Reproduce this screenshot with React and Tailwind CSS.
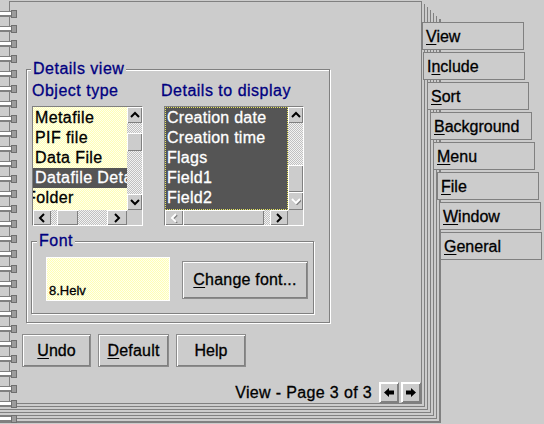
import React from 'react';

const bevel = 'bg-[#cccccc] shadow-[inset_1px_1px_0_#ffffff,inset_-1px_-1px_0_#808080]';
const track = 'bg-[image:repeating-conic-gradient(#c0c0c0_0_25%,#f2f2f2_0_50%)] bg-[length:2px_2px]';
const yellow = 'bg-[image:repeating-conic-gradient(#ffffb4_0_25%,#ffffee_0_50%)] bg-[length:2px_2px]';
const etched = 'border border-[#808080] shadow-[inset_1px_1px_0_#ffffff,1px_1px_0_#ffffff]';
const button =
  'flex items-center justify-center border border-[#8c8c8c] bg-[#cccccc] text-[16px] shadow-[inset_1px_1px_0_#ffffff,inset_-1px_-1px_0_#808080]';

function Chevron({ dir, disabled }) {
  const d = {
    up: 'M1 6 L5 2 L9 6',
    down: 'M1 2 L5 6 L9 2',
    left: 'M6 1 L2 5 L6 9',
    right: 'M2 1 L6 5 L2 9',
  }[dir];
  const vertical = dir === 'up' || dir === 'down';
  return (
    <svg
      width={vertical ? 10 : 8}
      height={vertical ? 8 : 10}
      viewBox={vertical ? '0 0 10 8' : '0 0 8 10'}
    >
      {disabled && (
        <path d={d} transform="translate(1 1)" stroke="#808080" strokeWidth="2" fill="none" />
      )}
      <path d={d} stroke={disabled ? '#ffffff' : '#000000'} strokeWidth="2" fill="none" />
    </svg>
  );
}

function Spiral() {
  const rings = Array.from({ length: 28 }, (_, i) => 10 + i * 15);
  return (
    <svg className="absolute left-0 top-0" width="18" height="424" viewBox="0 0 18 424">
      {rings.map((y) => (
        <g key={y}>
          <rect x="0" y={y + 1} width="12" height="6" fill="#808080" />
          <rect x="0" y={y + 2} width="11" height="3" fill="#ffffff" />
          <rect x="11" y={y} width="6" height="8" fill="#707070" />
          <rect x="12" y={y + 1} width="4" height="6" fill="#9c9c9c" />
        </g>
      ))}
    </svg>
  );
}

function NavArrow({ dir }) {
  return (
    <div className="flex h-[21px] w-[20px] items-center justify-center border border-t-white border-l-white border-b-[#808080] border-r-[#808080] bg-[#cccccc] shadow-[inset_1px_1px_0_#ffffff,inset_-1px_-1px_0_#808080]">
      <svg width="10" height="9" viewBox="0 0 10 9">
        {dir === 'left' ? (
          <path d="M0 4.5 L5 0 L5 2.5 L10 2.5 L10 6.5 L5 6.5 L5 9 Z" fill="#000000" />
        ) : (
          <path d="M10 4.5 L5 0 L5 2.5 L0 2.5 L0 6.5 L5 6.5 L5 9 Z" fill="#000000" />
        )}
      </svg>
    </div>
  );
}

function ObjectTypeList() {
  const items = ['Metafile', 'PIF file', 'Data File', 'Datafile Details', 'Folder'];
  return (
    <div className="flex w-[111px] flex-col border border-t-[#808080] border-l-[#808080] border-r-white border-b-white">
      <div className="flex">
        <div className={`h-[103px] w-[94px] overflow-hidden pt-[1px] ${yellow}`}>
          {items.map((item) => (
            <div
              key={item}
              className={`h-[20px] whitespace-nowrap pl-[2px] text-[16px] leading-[20px] tracking-[0.4px] ${
                item === 'Datafile Details' ? 'bg-[#555555] text-white' : 'text-black'
              }`}
            >
              {item === 'Folder' ? <span className="-ml-[9px]">{item}</span> : item}
            </div>
          ))}
        </div>
        <div className="flex w-[15px] flex-col">
          <div className={`flex h-[16px] items-center justify-center ${bevel}`}>
            <Chevron dir="up" />
          </div>
          <div className={`h-[10px] ${track}`} />
          <div className={`h-[18px] ${bevel}`} />
          <div className={`h-[43px] ${track}`} />
          <div className={`flex h-[16px] items-center justify-center ${bevel}`}>
            <Chevron dir="down" />
          </div>
        </div>
      </div>
      <div className="flex h-[15px]">
        <div className={`flex w-[18px] items-center justify-center ${bevel}`}>
          <Chevron dir="left" />
        </div>
        <div className={`w-[6px] ${track}`} />
        <div className={`w-[21px] ${bevel}`} />
        <div className={`w-[29px] ${track}`} />
        <div className={`flex w-[20px] items-center justify-center ${bevel}`}>
          <Chevron dir="right" />
        </div>
        <div className="w-[15px] bg-[#cccccc]" />
      </div>
    </div>
  );
}

function DetailsList() {
  const items = ['Creation date', 'Creation time', 'Flags', 'Field1', 'Field2'];
  return (
    <div className="flex w-[140px] flex-col border border-t-[#808080] border-l-[#808080] border-r-white border-b-white">
      <div className="flex">
        <div className="h-[103px] w-[123px] overflow-hidden border border-dotted border-[#e6e660] bg-[#555555]">
          {items.map((item) => (
            <div
              key={item}
              className="h-[20px] whitespace-nowrap pl-[1px] text-[16px] leading-[20px] tracking-[0.25px] text-white"
            >
              {item}
            </div>
          ))}
        </div>
        <div className="flex w-[15px] flex-col">
          <div className={`flex h-[16px] items-center justify-center ${bevel}`}>
            <Chevron dir="up" />
          </div>
          <div className={`h-[42px] ${track}`} />
          <div className={`h-[27px] ${bevel}`} />
          <div className={`flex h-[18px] items-center justify-center ${bevel}`}>
            <Chevron dir="down" disabled />
          </div>
        </div>
      </div>
      <div className="flex h-[15px]">
        <div className={`flex w-[18px] items-center justify-center ${bevel}`}>
          <Chevron dir="left" disabled />
        </div>
        <div className={`w-[81px] ${bevel}`} />
        <div className={`w-[6px] ${track}`} />
        <div className={`flex w-[18px] items-center justify-center ${bevel}`}>
          <Chevron dir="right" />
        </div>
        <div className="w-[15px] bg-[#cccccc]" />
      </div>
    </div>
  );
}

function Page() {
  return (
    <div className="-mt-[3px] ml-[9px] flex h-[403px] w-[413px] flex-col border border-[#808080]">
      <div className={`relative ml-[16px] mt-[67px] h-[254px] w-[304px] ${etched}`}>
        <span className="absolute -top-[11px] left-[4px] bg-[#cccccc] px-[2px] text-[16px] leading-[20px] tracking-[0.5px] text-[#000080]">
          Details view
        </span>
        <div className="flex pl-[5px] pt-[11px]">
          <div className="flex flex-col">
            <div className="h-[20px] text-[16px] leading-[20px] tracking-[0.5px] text-[#000080]">Object type</div>
            <div className="mt-[5px]">
              <ObjectTypeList />
            </div>
          </div>
          <div className="ml-[21px] flex flex-col">
            <div className="-ml-[3px] h-[20px] text-[16px] leading-[20px] tracking-[0.5px] text-[#000080]">
              Details to display
            </div>
            <div className="mt-[5px]">
              <DetailsList />
            </div>
          </div>
        </div>
        <div className={`relative ml-[4px] mt-[15px] h-[73px] w-[283px] ${etched}`}>
          <span className="absolute -top-[11px] left-[5px] bg-[#cccccc] px-[2px] text-[16px] leading-[20px] tracking-[0.5px] text-[#000080]">
            Font
          </span>
          <div className="flex items-start pl-[14px] pt-[15px]">
            <div className={`flex h-[44px] w-[124px] items-end border border-white pb-[1px] pl-[2px] ${yellow}`}>
              <span className="text-[13px] leading-[16px]">8.Helv</span>
            </div>
            <div className={`ml-[12px] mt-[4px] h-[38px] w-[126px] tracking-[0.2px] ${button}`}>
              <span>
                <span className="underline decoration-1 underline-offset-2">C</span>hange font...
              </span>
            </div>
          </div>
        </div>
      </div>

      <div className="ml-[12px] mt-[11px] flex gap-[7px]">
        <div className={`h-[33px] w-[69px] ${button}`}>
          <span>
            <span className="underline decoration-1 underline-offset-2">U</span>ndo
          </span>
        </div>
        <div className={`h-[33px] w-[71px] tracking-[0.2px] ${button}`}>
          <span>
            <span className="underline decoration-1 underline-offset-2">D</span>efault
          </span>
        </div>
        <div className={`h-[33px] w-[70px] ${button}`}>Help</div>
      </div>

      <div className="mt-auto flex items-center justify-end">
        <span className="mr-[7px] text-[16px] leading-[20px] tracking-[0.35px]">View - Page 3 of 3</span>
        <div className="flex gap-[2px]">
          <NavArrow dir="left" />
          <NavArrow dir="right" />
        </div>
      </div>
    </div>
  );
}

const tabs = [
  { first: 'V', rest: 'iew', shift: 'ml-0' },
  { pre: 'I', first: 'n', rest: 'clude', shift: 'ml-[1px]' },
  { first: 'S', rest: 'ort', shift: 'ml-[5px]' },
  { first: 'B', rest: 'ackground', shift: 'ml-[8px]' },
  { first: 'M', rest: 'enu', shift: 'ml-[11px]' },
  { first: 'F', rest: 'ile', shift: 'ml-[15px]' },
  { first: 'W', rest: 'indow', shift: 'ml-[17px]' },
  { first: 'G', rest: 'eneral', shift: 'ml-[18px]' },
];

export default function App() {
  return (
    <div className="relative flex h-[424px] w-[544px] items-start overflow-hidden bg-[#cccccc] pt-[19px] font-['Liberation_Sans',Arial,sans-serif] text-black [-webkit-text-stroke:0.3px]">
      {/* stacked back pages: each level adds a right and bottom edge */}
      <div className="flex border-r-2 border-b-2 border-[#808080] pr-[2px] pb-[2px]">
        <div className="-mt-[3px] flex border-r border-b border-[#808080] pr-[2px] pb-[2px]">
          <div className="-mt-[3px] flex border-r border-b border-[#808080] pr-[2px] pb-[2px]">
            <div className="-mt-[3px] flex border-r border-b border-[#808080] pr-[2px] pb-[2px]">
              <div className="-mt-[3px] flex border-r border-b border-[#808080] pr-[2px] pb-[2px]">
                <div className="-mt-[3px] flex border-r border-b border-[#808080] pr-[2px] pb-[2px]">
                  <Page />
                </div>
              </div>
            </div>
          </div>
        </div>
      </div>

      <div className="absolute left-[422px] top-[22px] flex flex-col gap-[2px]">
        {tabs.map((t) => (
          <div
            key={t.first + t.rest}
            className={`flex h-[28px] w-[102px] items-center border border-[#808080] bg-[#cccccc] pl-[3px] pt-[1px] text-[16px] leading-[20px] ${t.shift}`}
          >
            <span>
              {t.pre}
              <span className="underline decoration-1 underline-offset-2">{t.first}</span>
              {t.rest}
            </span>
          </div>
        ))}
      </div>

      <Spiral />
    </div>
  );
}
